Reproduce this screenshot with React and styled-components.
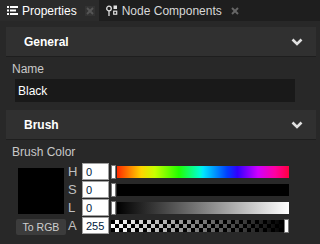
import React from "react";
import styled, { createGlobalStyle } from "styled-components";

const GlobalStyle = createGlobalStyle`
  html, body {
    margin: 0;
    padding: 0;
    background: #282828;
    font-family: "Liberation Sans", Arial, sans-serif;
  }
`;

const Window = styled.div`
  width: 320px;
  height: 244px;
  overflow: hidden;
  background: #282828;
`;

const TabBar = styled.div`
  display: flex;
  height: 21px;
  background: #1e1e1e;
`;

const Tab = styled.div`
  display: flex;
  align-items: center;
  gap: 4px;
  padding: 0 4px 0 7px;
  background: ${(p) => (p.active ? "#2b2b2b" : "transparent")};
  color: ${(p) => (p.active ? "#ffffff" : "#d8d8d8")};
  font-size: 12px;
  white-space: nowrap;
`;

const Close = styled.span`
  margin-left: 4px;
  width: 10px;
  height: 10px;
  display: flex;
  align-items: center;
  justify-content: center;
  background: ${(p) => (p.active ? "#333" : "transparent")};
`;

const Body = styled.div`
  padding: 6px 4px 0 6px;
`;

const Header = styled.div`
  display: flex;
  align-items: center;
  justify-content: space-between;
  height: 29px;
  padding: 0 13px 0 18px;
  background: #303030;
  border-bottom: 1px solid #1e1e1e;
  color: #fff;
  font-weight: 700;
  font-size: 12px;
`;

const Section = styled.div`
  padding: 4px 0 8px 6px;
`;

const Label = styled.div`
  color: #c8c8c8;
  font-size: 12px;
  line-height: 16px;
`;

const TextBox = styled.div`
  margin: 2px 0 0 3px;
  width: 280px;
  height: 23px;
  box-sizing: border-box;
  padding: 0 3px;
  background: #191919;
  color: #fff;
  font-size: 12px;
  display: flex;
  align-items: center;
`;

const Picker = styled.div`
  display: flex;
  margin-top: 3px;
`;

const SwatchCol = styled.div`
  display: flex;
  flex-direction: column;
  align-items: center;
  width: 54px;
  padding: 5px 0 0 2px;
`;

const Swatch = styled.div`
  width: 46px;
  height: 46px;
  background: #000;
`;

const Button = styled.div`
  margin-top: 5px;
  width: 50px;
  height: 16px;
  border-radius: 2px;
  background: #3c3c3c;
  color: #cfcfcf;
  font-size: 10.5px;
  display: flex;
  align-items: center;
  justify-content: center;
`;

const Rows = styled.div`
  display: flex;
  flex-direction: column;
  gap: 1px;
`;

const Row = styled.div`
  display: flex;
  align-items: center;
  height: 17px;
`;

const Letter = styled.span`
  width: 14px;
  color: #c0c0c0;
  font-size: 13px;
`;

const NumBox = styled.div`
  width: 27px;
  height: 17px;
  box-sizing: border-box;
  border: 1px solid #a0a0a0;
  background: #fff;
  color: #001a40;
  font-size: 11px;
  padding-left: 3px;
  display: flex;
  align-items: center;
`;

const Slider = styled.div`
  display: flex;
  align-items: center;
  margin-left: 2px;
  width: 178px;
  height: 13px;
`;

const Thumb = styled.div`
  width: 5px;
  height: 14px;
  background: #fff;
  border: 1px solid #777;
  box-sizing: border-box;
  flex: none;
`;

const Bar = styled.div`
  flex: 1;
  height: 12px;
  margin-left: ${(p) => (p.gap ? 1 : 0)}px;
  background-image: ${(p) => p.bg};
  background-color: #000;
  background-size: ${(p) => p.size || "100% 100%"};
`;

const hue =
  "linear-gradient(to right, #ff2a00, #ffd400 14%, #c8ff00 22%, #22ff00 36%, #00ffd0 48%, #00e8ff 50%, #0040ff 64%, #3000ff 70%, #d000ff 82%, #ff00a0 92%, #ff0040)";
const checker =
  "linear-gradient(to right, rgba(0,0,0,0), #000), repeating-conic-gradient(#fff 0 25%, #000 0 50%)";

const ListIcon = () => (
  <svg width="11" height="9" viewBox="0 0 11 9" fill="#fff">
    <rect x="0" y="0" width="2" height="2" />
    <rect x="3" y="0" width="8" height="2" />
    <rect x="0" y="3.5" width="2" height="2" />
    <rect x="3" y="3.5" width="6" height="2" />
    <rect x="0" y="7" width="2" height="2" />
    <rect x="3" y="7" width="8" height="2" />
  </svg>
);

const NodeIcon = () => (
  <svg width="12" height="11" viewBox="0 0 12 11" fill="none" stroke="#e0e0e0">
    <circle cx="3" cy="3.5" r="2.3" strokeWidth="1.3" />
    <line x1="3" y1="6" x2="3" y2="11" strokeWidth="1.3" />
    <rect x="7.5" y="0.5" width="3.5" height="3.5" fill="#e0e0e0" stroke="none" />
    <rect x="7.7" y="6.2" width="3" height="3" strokeWidth="1.2" />
  </svg>
);

const X = ({ color }) => (
  <svg width="8" height="8" viewBox="0 0 8 8" stroke={color} strokeWidth="2">
    <line x1="1" y1="1" x2="7" y2="7" />
    <line x1="7" y1="1" x2="1" y2="7" />
  </svg>
);

const Chevron = () => (
  <svg width="12" height="8" viewBox="0 0 12 8" fill="none" stroke="#e0e0e0" strokeWidth="2.6">
    <polyline points="1.5,1.5 6,6 10.5,1.5" />
  </svg>
);

const rows = [
  { k: "H", v: "0", bg: hue },
  { k: "S", v: "0", bg: "linear-gradient(#000, #000)" },
  { k: "L", v: "0", bg: "linear-gradient(to right, #000, #fff)" },
  { k: "A", v: "255", bg: checker, size: "100% 100%, 8px 8px" },
];

export default function App() {
  return (
    <Window>
      <GlobalStyle />
      <TabBar>
        <Tab active>
          <ListIcon />
          Properties
          <Close active>
            <X color="#555" />
          </Close>
        </Tab>
        <Tab>
          <NodeIcon />
          Node Components
          <Close>
            <X color="#666" />
          </Close>
        </Tab>
      </TabBar>
      <Body>
        <Header>
          General
          <Chevron />
        </Header>
        <Section>
          <Label>Name</Label>
          <TextBox>Black</TextBox>
        </Section>
        <Header>
          Brush
          <Chevron />
        </Header>
        <Section>
          <Label>Brush Color</Label>
          <Picker>
            <SwatchCol>
              <Swatch />
              <Button>To RGB</Button>
            </SwatchCol>
            <Rows>
              {rows.map((r) => (
                <Row key={r.k}>
                  <Letter>{r.k}</Letter>
                  <NumBox>{r.v}</NumBox>
                  <Slider>
                    {r.k !== "A" && <Thumb />}
                    <Bar bg={r.bg} size={r.size} gap={r.k !== "A"} />
                    {r.k === "A" && <Thumb />}
                  </Slider>
                </Row>
              ))}
            </Rows>
          </Picker>
        </Section>
      </Body>
    </Window>
  );
}
